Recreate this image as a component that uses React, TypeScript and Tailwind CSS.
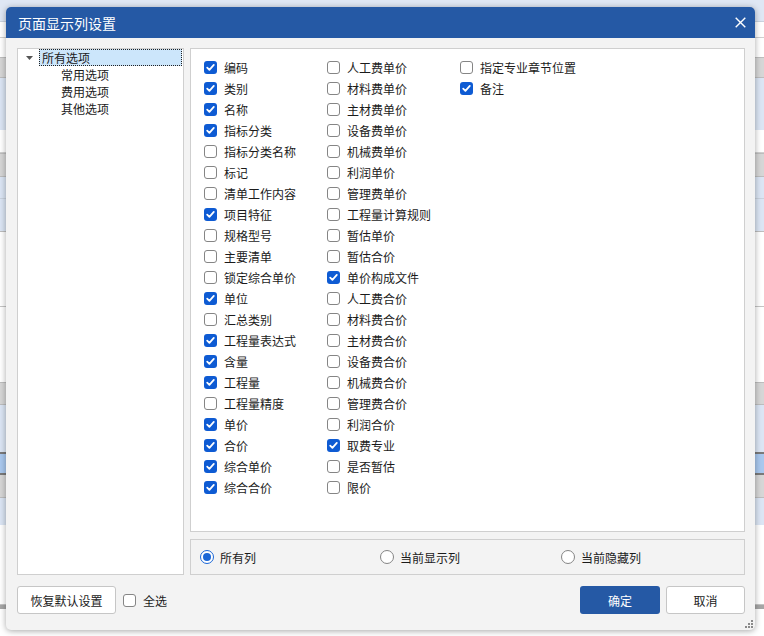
import React from "react";

type Item = { label: string; checked?: boolean };

const col1: Item[] = [
  { label: "编码", checked: true },
  { label: "类别", checked: true },
  { label: "名称", checked: true },
  { label: "指标分类", checked: true },
  { label: "指标分类名称" },
  { label: "标记" },
  { label: "清单工作内容" },
  { label: "项目特征", checked: true },
  { label: "规格型号" },
  { label: "主要清单" },
  { label: "锁定综合单价" },
  { label: "单位", checked: true },
  { label: "汇总类别" },
  { label: "工程量表达式", checked: true },
  { label: "含量", checked: true },
  { label: "工程量", checked: true },
  { label: "工程量精度" },
  { label: "单价", checked: true },
  { label: "合价", checked: true },
  { label: "综合单价", checked: true },
  { label: "综合合价", checked: true },
];

const col2: Item[] = [
  { label: "人工费单价" },
  { label: "材料费单价" },
  { label: "主材费单价" },
  { label: "设备费单价" },
  { label: "机械费单价" },
  { label: "利润单价" },
  { label: "管理费单价" },
  { label: "工程量计算规则" },
  { label: "暂估单价" },
  { label: "暂估合价" },
  { label: "单价构成文件", checked: true },
  { label: "人工费合价" },
  { label: "材料费合价" },
  { label: "主材费合价" },
  { label: "设备费合价" },
  { label: "机械费合价" },
  { label: "管理费合价" },
  { label: "利润合价" },
  { label: "取费专业", checked: true },
  { label: "是否暂估" },
  { label: "限价" },
];

const col3: Item[] = [{ label: "指定专业章节位置" }, { label: "备注", checked: true }];

// background sheet rows behind the dialog
const bgRows = [
  "h-[22px] bg-[#dfe7f4] border-b border-[#c9d2de]",
  "h-[16px] bg-white border-b border-[#d0d0d0]",
  "h-[19px] bg-white",
  "h-[21px] bg-[#d6d6d6] border-y border-[#bdbdbd]",
  "h-[52px] bg-[#dbe5f4]",
  "h-[23px] bg-white border-b border-[#d0d0d0]",
  "h-[24px] bg-[#d6d6d6] border-y border-[#bdbdbd]",
  "h-[22px] bg-[#dbe5f4] border-b border-[#c9d2de]",
  "h-[33px] bg-[#dbe5f4] border-b border-[#bdbdbd]",
  "h-[75px] bg-white border-b border-[#c4c4c4]",
  "h-[75px] bg-white",
  "h-[23px] bg-[#d6d6d6] border-y border-[#bdbdbd]",
  "h-[47px] bg-[#dbe5f4]",
  "h-[23px] bg-[#a9c8ee] border-y-2 border-[#7a7a7a]",
  "h-[23px] bg-[#d6d6d6] border-b border-[#bdbdbd]",
  "h-[27px] bg-[#dbe5f4]",
  "h-[80px] bg-white border-b border-[#c4c4c4]",
  "h-[4px] bg-[#a6a6a6]",
  "h-[20px] bg-white",
];

const CheckBox = ({ checked }: { checked?: boolean }) =>
  checked ? (
    <span className="flex h-[13px] w-[13px] shrink-0 items-center justify-center rounded-[3px] bg-[#0e5bd3]">
      <svg width="11" height="11" viewBox="0 0 11 11" fill="none">
        <path d="M2.2 5.6l2.2 2.2 4.4-4.9" stroke="white" strokeWidth="1.8" strokeLinecap="round" strokeLinejoin="round" />
      </svg>
    </span>
  ) : (
    <span className="h-[13px] w-[13px] shrink-0 rounded-[3px] border border-[#858585] bg-white" />
  );

const Radio = ({ checked }: { checked?: boolean }) =>
  checked ? (
    <span className="flex h-[14px] w-[14px] shrink-0 items-center justify-center rounded-full border border-[#1a66d6] bg-white">
      <span className="h-[8px] w-[8px] rounded-full bg-[#1a66d6]" />
    </span>
  ) : (
    <span className="h-[14px] w-[14px] shrink-0 rounded-full border border-[#858585] bg-white" />
  );

const Column = ({ items, width }: { items: Item[]; width: string }) => (
  <div className={`flex flex-col ${width}`}>
    {items.map((it) => (
      <label key={it.label} className="flex h-[21px] items-center gap-[7px]">
        <CheckBox checked={it.checked} />
        <span>{it.label}</span>
      </label>
    ))}
  </div>
);

export default function App() {
  return (
    <div
      className="relative h-[636px] w-[764px] overflow-hidden bg-white text-[12px] leading-[17px] text-[#1b1b1b]"
      style={{ fontFamily: '"Microsoft YaHei", "Noto Sans CJK SC", "Noto Sans", sans-serif' }}
    >
      {/* sheet behind */}
      <div className="flex flex-col">
        {bgRows.map((c, i) => (
          <div key={i} className={`w-full ${c}`} />
        ))}
      </div>

      {/* dialog */}
      <div className="absolute left-[6px] top-[7px] flex h-[623px] w-[749px] flex-col rounded-[5px] bg-[#f3f3f3] shadow-[0_1px_6px_rgba(0,0,0,0.35)]">
        <div className="flex h-[31px] items-center justify-between rounded-t-[5px] bg-[#2559a5] pl-[12px] pr-[9px] text-white">
          <span className="text-[14px] leading-[18px]">页面显示列设置</span>
          <svg width="11" height="11" viewBox="0 0 11 11">
            <path d="M0.7 0.7l9.6 9.6M10.3 0.7l-9.6 9.6" stroke="white" strokeWidth="1.4" />
          </svg>
        </div>

        <div className="flex flex-col pl-[11px] pr-[10px] pt-[10px]">
          <div className="flex gap-[6px]">
            {/* tree */}
            <div className="h-[527px] w-[167px] border border-[#cfcfcf] bg-white">
              <div className="flex h-[17px] items-center">
                <svg className="ml-[8px] mr-[6px]" width="7" height="4" viewBox="0 0 7 4">
                  <path d="M0 0h7L3.5 4z" fill="#555" />
                </svg>
                <div className="mr-[1px] flex h-[17px] flex-1 items-center border border-dotted border-[#222] bg-[#cce6fb] pl-[2px]">
                  所有选项
                </div>
              </div>
              {["常用选项", "费用选项", "其他选项"].map((t) => (
                <div key={t} className="flex h-[17px] items-center pl-[43px]">
                  {t}
                </div>
              ))}
            </div>

            <div className="flex w-[555px] flex-col gap-[7px]">
              <div className="flex h-[484px] border border-[#cfcfcf] bg-white pl-[13px] pt-[8px]">
                <Column items={col1} width="w-[123px]" />
                <Column items={col2} width="w-[133px]" />
                <Column items={col3} width="w-[200px]" />
              </div>
              <div className="flex h-[36px] items-center border border-[#cfcfcf] pl-[9px]">
                <label className="flex w-[180px] items-center gap-[6px]">
                  <Radio checked />
                  <span>所有列</span>
                </label>
                <label className="flex w-[181px] items-center gap-[6px]">
                  <Radio />
                  <span>当前显示列</span>
                </label>
                <label className="flex items-center gap-[6px]">
                  <Radio />
                  <span>当前隐藏列</span>
                </label>
              </div>
            </div>
          </div>

          <div className="mt-[11px] flex h-[28px] items-center justify-between">
            <div className="flex items-center">
              <button className="h-[28px] w-[99px] rounded-[3px] border border-[#c6c6c6] bg-white">恢复默认设置</button>
              <label className="ml-[7px] flex items-center gap-[7px]">
                <CheckBox />
                <span>全选</span>
              </label>
            </div>
            <div className="flex items-center gap-[6px]">
              <button className="h-[28px] w-[80px] rounded-[3px] bg-[#2559a5] text-white">确定</button>
              <button className="h-[28px] w-[79px] rounded-[3px] border border-[#c6c6c6] bg-white">取消</button>
            </div>
          </div>
        </div>

        {/* resize grip */}
        <svg className="absolute bottom-[2px] right-[2px]" width="9" height="9" viewBox="0 0 9 9">
          <rect x="7" y="1" width="2" height="2" fill="#8a8a8a" />
          <rect x="4" y="4" width="2" height="2" fill="#8a8a8a" />
          <rect x="7" y="4" width="2" height="2" fill="#8a8a8a" />
          <rect x="1" y="7" width="2" height="2" fill="#8a8a8a" />
          <rect x="4" y="7" width="2" height="2" fill="#8a8a8a" />
          <rect x="7" y="7" width="2" height="2" fill="#8a8a8a" />
        </svg>
      </div>
    </div>
  );
}
